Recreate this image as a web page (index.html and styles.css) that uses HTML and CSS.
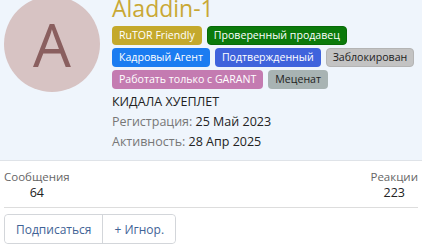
FILE: index.html
```html
<!DOCTYPE html>
<html lang="ru">

<head>
    <meta charset="UTF-8">
    <meta name="viewport" content="width=device-width, initial-scale=1.0">
    <title>Aladdin-1</title>
    <link rel="stylesheet" href="styles.css">
</head>

<body>

    <div class="profile">
        <div class="profile-head">
            <div class="avatar">A</div>
            <div class="info">
                <h1 class="username">Aladdin-1</h1>
                <div class="badges">
                    <div class="badge-row">
                        <span class="badge badge-rutor">RuTOR Friendly</span>
                        <span class="badge badge-seller">Проверенный продавец</span>
                    </div>
                    <div class="badge-row">
                        <span class="badge badge-agent">Кадровый Агент</span>
                        <span class="badge badge-verified">Подтвержденный</span>
                        <span class="badge badge-banned">Заблокирован</span>
                    </div>
                    <div class="badge-row">
                        <span class="badge badge-garant">Работать только с GARANT</span>
                        <span class="badge badge-patron">Меценат</span>
                    </div>
                </div>
                <div class="user-title">КИДАЛА ХУЕПЛЕТ</div>
                <div class="meta-row"><span class="meta-label">Регистрация:</span> 25 Май 2023</div>
                <div class="meta-row"><span class="meta-label">Активность:</span> 28 Апр 2025</div>
            </div>
        </div>

        <div class="stats">
            <div class="stat">
                <div class="stat-label">Сообщения</div>
                <div class="stat-value">64</div>
            </div>
            <div class="stat">
                <div class="stat-label">Реакции</div>
                <div class="stat-value">223</div>
            </div>
        </div>

        <div class="actions">
            <button class="btn">Подписаться</button>
            <button class="btn">+ Игнор.</button>
        </div>
    </div>

</body>

</html>
```

FILE: styles.css
```css
body {
    font-family: "Open Sans", "Noto Sans", sans-serif;
    background-color: #ffffff;
    color: #222222;
    margin: 0;
    overflow: hidden;
}

.profile-head {
    display: flex;
    gap: 12px;
    background-color: #eff5fc;
    border-bottom: 1px solid #dfe3e8;
    padding: 0 4px 8px 4px;
}

.avatar {
    flex: none;
    width: 96px;
    height: 96px;
    margin-top: -4px;
    border-radius: 50%;
    background-color: #d7c3c3;
    color: #8a5f5f;
    font-size: 60px;
    line-height: 96px;
    text-align: center;
}

.info {
    flex: 1;
    margin-top: -6px;
}

.username {
    margin: 0;
    font-size: 23px;
    font-weight: normal;
    line-height: 29px;
    color: #c9a835;
}

.badges {
    display: flex;
    flex-direction: column;
    gap: 3px;
    margin-top: 3px;
}

.badge-row {
    display: flex;
    gap: 5px;
}

.badge {
    font-size: 10.6px;
    line-height: 15px;
    padding: 1px 6px;
    border-radius: 4px;
    border: 1px solid transparent;
    color: #ffffff;
    white-space: nowrap;
}

.badge-rutor {
    background-color: #c4a92c;
}

.badge-seller {
    background-color: #0b7a0b;
    border-color: #086a08;
}

.badge-agent {
    background-color: #1b7cf1;
}

.badge-verified {
    background-color: #3f63dc;
}

.badge-banned {
    background-color: #c3c3c3;
    border-color: #b4b4b4;
    color: #222222;
}

.badge-garant {
    background-color: #c47bb1;
}

.badge-patron {
    background-color: #a8b3b3;
    color: #222222;
}

.user-title {
    margin-top: 3px;
    font-size: 12.5px;
    line-height: 20px;
}

.meta-row {
    font-size: 12.5px;
    line-height: 20px;
}

.meta-label {
    color: #777777;
}

.stats {
    display: flex;
    justify-content: space-between;
    margin: 0 4px 0 4px;
    padding: 8px 0 5px 0;
    border-bottom: 1px solid #dddddd;
}

.stat {
    text-align: center;
}

.stat-label {
    font-size: 11.5px;
    line-height: 15px;
    color: #666666;
}

.stat-value {
    font-size: 12.5px;
    line-height: 18px;
}

.actions {
    display: inline-flex;
    margin: 6px 4px 0 4px;
    border: 1px solid #d3d6da;
    border-radius: 4px;
}

.btn {
    font-family: inherit;
    font-size: 12px;
    color: #3f6396;
    background-color: #ffffff;
    border: none;
    padding: 0 11px;
    height: 28px;
    cursor: pointer;
    border-radius: 4px;
}

.btn + .btn {
    border-left: 1px solid #d3d6da;
    border-radius: 0 4px 4px 0;
}
```
